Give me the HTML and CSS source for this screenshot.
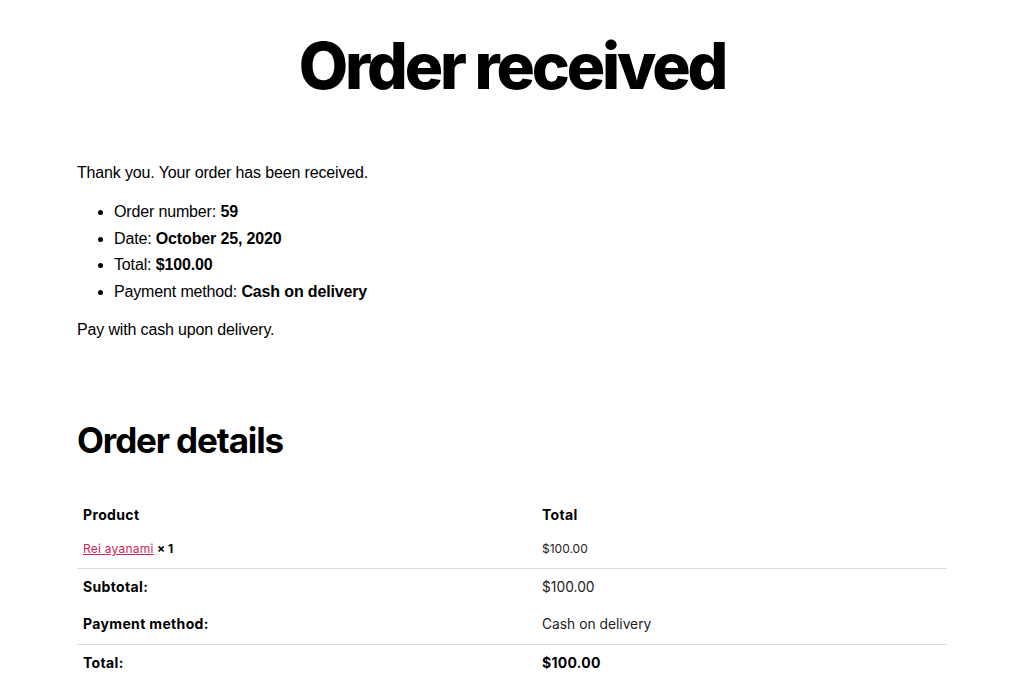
FILE: index.html
```html
<!DOCTYPE html>
<html lang="en">
<head>
<meta charset="utf-8">
<title>Order received</title>
<link rel="stylesheet" href="styles.css">
</head>
<body>
<main class="page">
  <h1 class="page-title">Order received</h1>
  <section class="order">
    <p class="notice">Thank you. Your order has been received.</p>
    <ul class="overview">
      <li>Order number: <strong>59</strong></li>
      <li>Date: <strong>October 25, 2020</strong></li>
      <li>Total: <strong>$100.00</strong></li>
      <li>Payment method: <strong>Cash on delivery</strong></li>
    </ul>
    <p class="notice">Pay with cash upon delivery.</p>

    <h2 class="details-title">Order details</h2>
    <table class="details">
      <thead>
        <tr><th class="col-product">Product</th><th>Total</th></tr>
      </thead>
      <tbody>
        <tr class="item">
          <td class="col-product"><a href="#">Rei ayanami</a> <strong class="qty">× 1</strong></td>
          <td>$100.00</td>
        </tr>
      </tbody>
      <tfoot>
        <tr class="sep"><th>Subtotal:</th><td>$100.00</td></tr>
        <tr class="plain"><th>Payment method:</th><td>Cash on delivery</td></tr>
        <tr class="sep"><th>Total:</th><td><strong>$100.00</strong></td></tr>
      </tfoot>
    </table>
  </section>
</main>
</body>
</html>
```
FILE: styles.css
```css
html, body {
  margin: 0;
  padding: 0;
  background: #fff;
  color: #000;
}
body {
  font-family: "Liberation Sans", Arial, sans-serif;
  font-size: 16px;
}
.page {
  width: 870px;
  margin: 0 auto;
}
.page-title {
  font-family: Inter, sans-serif;
  font-weight: 800;
  font-size: 64px;
  letter-spacing: -0.049em;
  line-height: 1;
  text-align: center;
  margin: 34px 0 0;
}
.order {
  padding-top: 62px;
}
.notice {
  margin: 0;
  line-height: 26px;
  letter-spacing: -0.15px;
}
.overview {
  margin: 13px 0 12px;
  padding-left: 37px;
  line-height: 26.5px;
  letter-spacing: -0.15px;
}
.details-title {
  font-family: Inter, sans-serif;
  font-weight: 700;
  font-size: 35px;
  letter-spacing: -0.032em;
  line-height: 1.2;
  margin: 76px 0 0;
}
.details {
  width: 100%;
  border-collapse: collapse;
  margin-top: 37px;
  font-family: Inter, sans-serif;
  font-size: 14px;
}
.details th, .details td {
  text-align: left;
  padding: 9px 6px;
  line-height: 20px;
  vertical-align: middle;
}
.details th {
  font-weight: 700;
  letter-spacing: 0.025em;
}
.details td {
  font-size: 13.8px;
  color: #222;
}
.details .col-product {
  width: 447px;
}
.details thead th {
  padding: 7px 6px 8px;
}
.details .item td {
  font-size: 12px;
  padding: 6px 6px 9px;
}
.details .item a {
  color: #cd2653;
  text-decoration: underline;
  letter-spacing: 0.02em;
}
.details .qty {
  color: #000;
  font-weight: 700;
}
.details .sep th, .details .sep td {
  border-top: 1px solid #dcdcdc;
  padding-top: 8px;
}
.details .plain th, .details .plain td {
  padding: 8px 6px 10px;
}
.details tfoot td strong {
  color: #000;
  font-size: 14px;
  letter-spacing: 0.02em;
}
```
